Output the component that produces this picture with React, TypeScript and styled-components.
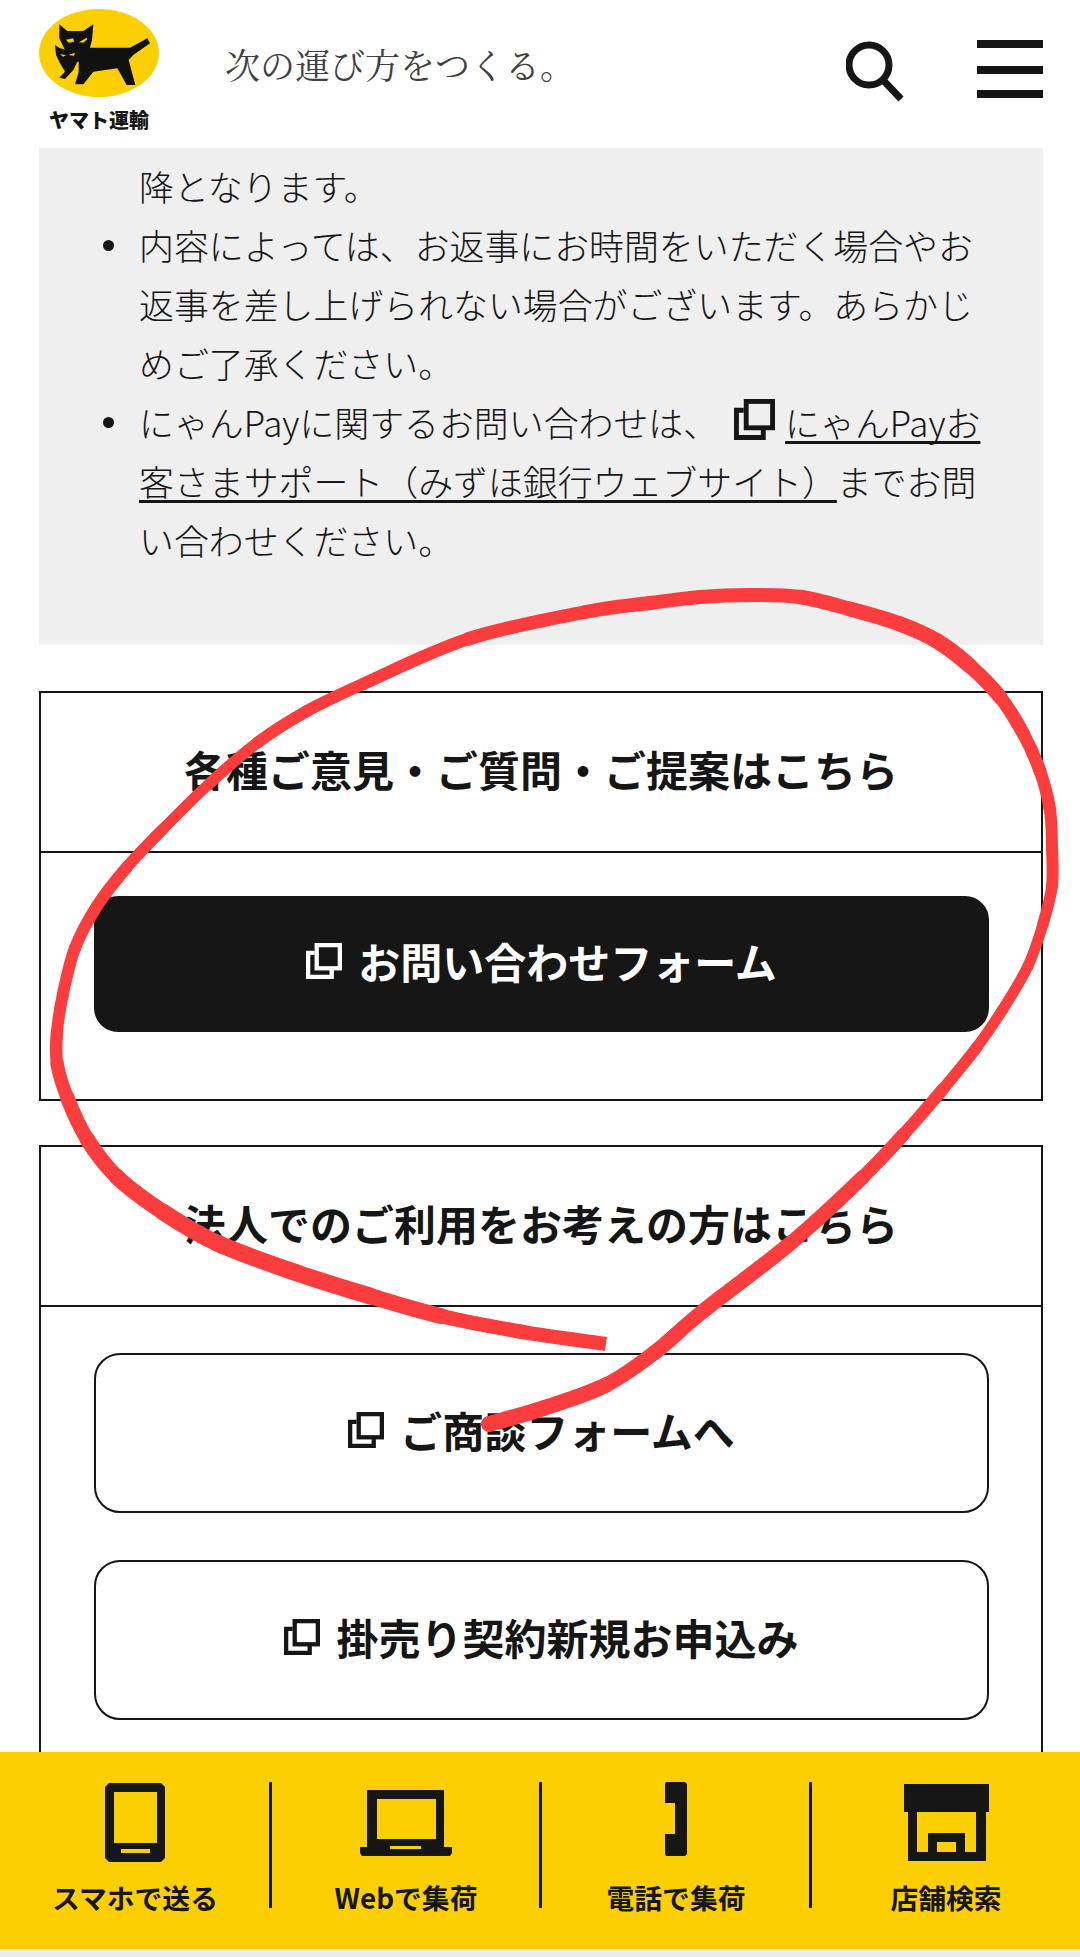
import React, { FC } from "react";
import styled, { createGlobalStyle } from "styled-components";

const INK = "#161616";
const SANS = `"Noto Sans CJK JP", "Noto Sans", sans-serif`;

const GlobalStyle = createGlobalStyle`
  html, body {
    margin: 0;
    padding: 0;
    background: #fff;
    color: ${INK};
    font-family: ${SANS};
  }
  * { box-sizing: border-box; }
`;

const StyledPage = styled.div`
  position: relative;
  width: 1080px;
  height: 1957px;
  overflow: hidden;
`;

const StyledHeader = styled.header`
  display: flex;
  align-items: flex-start;
  height: 148px;
  padding: 9px 37px 0 39px;
`;

const StyledLogo = styled.a`
  display: flex;
  flex-direction: column;
  align-items: center;
  width: 120px;
`;

const StyledLogoText = styled.span`
  margin-top: 11px;
  font-size: 20px;
  line-height: 24px;
  font-weight: 900;
  color: ${INK};
  white-space: nowrap;
`;

const StyledTagline = styled.div`
  margin: 33px 0 0 66px;
  font-family: "Noto Serif CJK JP", "Liberation Serif", "Noto Sans CJK JP", serif;
  font-size: 35px;
  line-height: 44px;
  color: #404040;
  white-space: nowrap;
`;

const StyledHeaderIcons = styled.div`
  display: flex;
  align-items: flex-start;
  gap: 73px;
  margin: 31px 0 0 auto;
`;

const StyledContent = styled.main`
  padding: 0 37px 0 39px;
`;

const StyledNotice = styled.ul`
  margin: 0;
  padding: 9px 54px 75px 100px;
  background: #efefef;
  font-size: 34.9px;
  line-height: 59px;
  font-weight: 300;
  list-style: none;
`;

const StyledNoticeItem = styled.li<{ $plain?: boolean }>`
  position: relative;

  &::before {
    content: "";
    display: ${({ $plain }) => ($plain ? "none" : "block")};
    position: absolute;
    top: 24px;
    left: -36px;
    width: 11px;
    height: 11px;
    border-radius: 50%;
    background: ${INK};
  }
`;

const StyledLink = styled.a`
  color: ${INK};
  text-decoration: underline;
  text-decoration-thickness: 2.5px;
  text-decoration-skip-ink: none;
  text-underline-offset: 4px;
`;

const StyledInlineIcon = styled.svg`
  display: inline-block;
  width: 41px;
  height: 41px;
  margin: 0 10px 0 16px;
  vertical-align: -3px;
`;

const StyledCard = styled.section<{ $first?: boolean }>`
  margin-top: ${({ $first }) => ($first ? "46px" : "44px")};
  border: 2px solid ${INK};
`;

const StyledCardTitle = styled.h2`
  display: flex;
  align-items: center;
  justify-content: center;
  height: 160px;
  margin: 0;
  padding-bottom: 6px;
  border-bottom: 2px solid ${INK};
  font-size: 42px;
  line-height: 1;
  font-weight: 700;
`;

const StyledCardBody = styled.div<{ $top: number; $bottom: number }>`
  display: flex;
  flex-direction: column;
  gap: 47px;
  padding: ${({ $top }) => $top}px 52px ${({ $bottom }) => $bottom}px 53px;
`;

const StyledButton = styled.a<{ $dark?: boolean }>`
  display: flex;
  align-items: center;
  justify-content: center;
  gap: 16px;
  height: ${({ $dark }) => ($dark ? "136px" : "160px")};
  padding-bottom: 6px;
  border: 2px solid ${INK};
  border-radius: ${({ $dark }) => ($dark ? "24px" : "26px")};
  background: ${({ $dark }) => ($dark ? INK : "#fff")};
  color: ${({ $dark }) => ($dark ? "#fff" : INK)};
  font-size: 42px;
  line-height: 1;
  font-weight: 700;
`;

const StyledButtonIcon = styled.svg`
  width: 36px;
  height: 36px;
  flex: none;
`;

const StyledScribble = styled.svg`
  position: absolute;
  top: 0;
  left: 0;
  pointer-events: none;
`;

const StyledFooter = styled.nav`
  position: absolute;
  left: 0;
  right: 0;
  bottom: 0;
  display: grid;
  grid-template-columns: repeat(4, 1fr);
  height: 205px;
  padding-top: 30px;
  background: #fccf03;
  border-bottom: 8px solid #ececec;
`;

const StyledFooterItem = styled.a<{ $first?: boolean }>`
  display: flex;
  flex-direction: column;
  align-items: center;
  height: 126px;
  margin-left: ${({ $first }) => ($first ? "0" : "-1px")};
  border-left: ${({ $first }) => ($first ? "0" : `3px solid ${INK}`)};
`;

const StyledFooterIcon = styled.svg`
  width: 100px;
  height: 82px;
  flex: none;
`;

const StyledFooterLabel = styled.span`
  margin-top: 19px;
  font-size: 27.8px;
  line-height: 28px;
  font-weight: 700;
  white-space: nowrap;
  color: ${INK};
`;

const ExternalGlyph: FC = () => (
  <g fill="none" stroke="currentColor" strokeWidth="5">
    <rect x="12.5" y="2.5" width="27" height="27" />
    <path d="M10 11.5H2.5V39.5H30V30" />
  </g>
);

const ButtonIcon: FC = () => (
  <StyledButtonIcon viewBox="0 0 42 42">
    <ExternalGlyph />
  </StyledButtonIcon>
);

const CatLogo: FC = () => (
  <svg width="120" height="88" viewBox="27 12 360 264">
    <ellipse cx="207" cy="144" rx="180" ry="132" fill="#fccf03" />
    <path
      d="M88 58L112 78L160 78L190 58L186 105L180 128L300 128L352 100L360 115L310 150L296 165L316 240L290 240L262 190L190 200L160 238L135 238L146 200L146 170L125 170L100 125L88 100Z"
      fill="#111"
    />
    <path d="M75 120L90 130L135 140L142 170L130 195L105 222L88 218L105 200L90 175L78 150Z" fill="#111" />
    <path
      d="M108 104L130 100L132 110L116 113ZM147 112L170 98L172 103L160 113ZM90 148L108 150L100 155ZM115 150L135 143L132 152Z"
      fill="#fccf03"
    />
  </svg>
);

const SearchIcon: FC = () => (
  <svg width="58" height="70" viewBox="0 0 58 70">
    <circle cx="23" cy="25" r="20" fill="none" stroke={INK} strokeWidth="7" />
    <path d="M37 40L55 59" fill="none" stroke={INK} strokeWidth="7" />
  </svg>
);

const MenuIcon: FC = () => (
  <svg width="66" height="58" viewBox="0 0 66 58" fill={INK}>
    <rect x="0" y="0" width="66" height="8" />
    <rect x="0" y="26" width="66" height="8" />
    <rect x="0" y="50" width="66" height="8" />
  </svg>
);

// hand-drawn circle, x / y / stroke width along the line
const SCRIBBLE: number[][] = [
  [606, 1344, 14], [523, 1332, 14], [441, 1316, 15], [370, 1296, 17], [297, 1273, 17],
  [217, 1243, 17], [163, 1212, 16], [117, 1177, 16], [87, 1139, 15], [67, 1097, 14],
  [57, 1063, 13], [57, 1032, 12], [63, 994, 12], [75, 948, 12], [97, 906, 12],
  [127, 867, 12], [163, 829, 11], [210, 783, 11], [257, 743, 12], [307, 711, 12],
  [363, 684, 12], [468, 639, 13], [585, 612, 14], [650, 603, 14], [700, 597, 14],
  [750, 595, 14], [800, 597, 14], [850, 609, 15], [900, 624, 15], [937, 641, 16],
  [970, 666, 15], [1000, 697, 14], [1023, 733, 13], [1040, 771, 13], [1050, 810, 12],
  [1052, 848, 12], [1052, 886, 12], [1043, 924, 11], [1028, 966, 11], [1003, 1009, 11],
  [977, 1047, 11], [943, 1089, 12], [903, 1135, 13], [863, 1177, 14], [792, 1242, 15],
  [702, 1312, 15], [654, 1353, 15], [606, 1385, 15], [544, 1408, 16], [489, 1424, 16],
];

const scribbleSegment = (i: number) => {
  const p0 = SCRIBBLE[Math.max(i - 1, 0)];
  const p1 = SCRIBBLE[i];
  const p2 = SCRIBBLE[i + 1];
  const p3 = SCRIBBLE[Math.min(i + 2, SCRIBBLE.length - 1)];
  const c1x = p1[0] + (p2[0] - p0[0]) / 6;
  const c1y = p1[1] + (p2[1] - p0[1]) / 6;
  const c2x = p2[0] - (p3[0] - p1[0]) / 6;
  const c2y = p2[1] - (p3[1] - p1[1]) / 6;
  return `M${p1[0]} ${p1[1]}C${c1x} ${c1y} ${c2x} ${c2y} ${p2[0]} ${p2[1]}`;
};

const Scribble: FC = () => (
  <StyledScribble width="1080" height="1957" viewBox="0 0 1080 1957">
    {SCRIBBLE.slice(0, -1).map((p, i) => (
      <path
        key={i}
        d={scribbleSegment(i)}
        fill="none"
        stroke="#fc3d3d"
        strokeLinecap={i === 0 ? "butt" : "round"}
        strokeWidth={(p[2] + SCRIBBLE[i + 1][2]) / 2}
      />
    ))}
  </StyledScribble>
);

const App: FC = () => (
  <StyledPage>
    <GlobalStyle />
    <StyledHeader>
      <StyledLogo>
        <CatLogo />
        <StyledLogoText>ヤマト運輸</StyledLogoText>
      </StyledLogo>
      <StyledTagline>次の運び方をつくる。</StyledTagline>
      <StyledHeaderIcons>
        <SearchIcon />
        <MenuIcon />
      </StyledHeaderIcons>
    </StyledHeader>

    <StyledContent>
      <StyledNotice>
        <StyledNoticeItem $plain>降となります。</StyledNoticeItem>
        <StyledNoticeItem>
          内容によっては、お返事にお時間をいただく場合やお返事を差し上げられない場合がございます。あらかじめご了承ください。
        </StyledNoticeItem>
        <StyledNoticeItem>
          にゃんPayに関するお問い合わせは、
          <StyledInlineIcon viewBox="0 0 42 42">
            <ExternalGlyph />
          </StyledInlineIcon>
          <StyledLink>にゃんPayお客さまサポート（みずほ銀行ウェブサイト）</StyledLink>
          までお問い合わせください。
        </StyledNoticeItem>
      </StyledNotice>

      <StyledCard $first>
        <StyledCardTitle>各種ご意見・ご質問・ご提案はこちら</StyledCardTitle>
        <StyledCardBody $top={43} $bottom={67}>
          <StyledButton $dark>
            <ButtonIcon />
            お問い合わせフォーム
          </StyledButton>
        </StyledCardBody>
      </StyledCard>

      <StyledCard>
        <StyledCardTitle>法人でのご利用をお考えの方はこちら</StyledCardTitle>
        <StyledCardBody $top={46} $bottom={60}>
          <StyledButton>
            <ButtonIcon />
            ご商談フォームへ
          </StyledButton>
          <StyledButton>
            <ButtonIcon />
            掛売り契約新規お申込み
          </StyledButton>
        </StyledCardBody>
      </StyledCard>
    </StyledContent>

    <Scribble />

    <StyledFooter>
      <StyledFooterItem $first>
        <StyledFooterIcon viewBox="0 0 100 82" fill={INK}>
          <path
            fillRule="evenodd"
            d="M24 1H76L80 5V76L76 80H24L20 76V5ZM29 10V61H72V10ZM36 67V71H65V67Z"
          />
        </StyledFooterIcon>
        <StyledFooterLabel>スマホで送る</StyledFooterLabel>
      </StyledFooterItem>
      <StyledFooterItem>
        <StyledFooterIcon viewBox="0 0 100 82" fill={INK}>
          <path
            fillRule="evenodd"
            d="M11 8H88V65H96V71L94 74H6L4 71V65H11ZM21 17V57H80V17ZM34 64V67H65V64Z"
          />
        </StyledFooterIcon>
        <StyledFooterLabel>Webで集荷</StyledFooterLabel>
      </StyledFooterItem>
      <StyledFooterItem>
        <StyledFooterIcon viewBox="0 0 100 82" fill={INK}>
          <path d="M40 0H59L61 2V72L59 74H40L39 72V52H49V21H39V2Z" />
        </StyledFooterIcon>
        <StyledFooterLabel>電話で集荷</StyledFooterLabel>
      </StyledFooterItem>
      <StyledFooterItem>
        <StyledFooterIcon viewBox="0 0 100 82" fill={INK}>
          <path
            fillRule="evenodd"
            d="M8 2H93V30H90V79H12V30H8ZM21 30V70H32V51H69V70H80V30ZM41 60V70H60V60Z"
          />
        </StyledFooterIcon>
        <StyledFooterLabel>店舗検索</StyledFooterLabel>
      </StyledFooterItem>
    </StyledFooter>
  </StyledPage>
);

export default App;
